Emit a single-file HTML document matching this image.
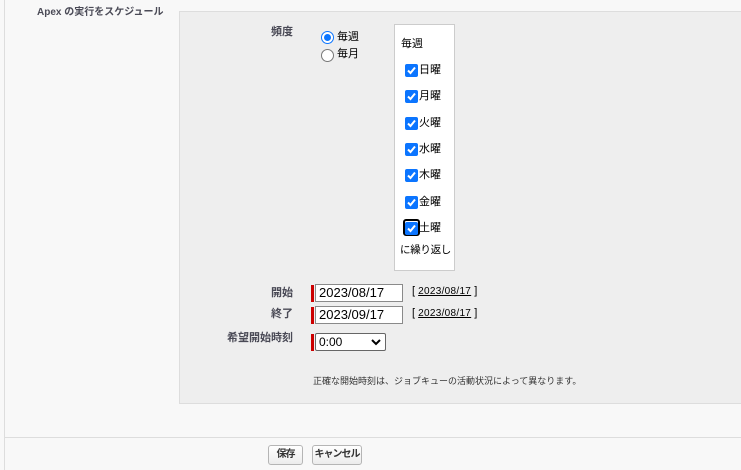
<!DOCTYPE html>
<html><head><meta charset="utf-8"><style>
*{margin:0;padding:0;box-sizing:border-box}
html,body{width:741px;height:470px}
body{background:#f8f8f8;font-family:"Liberation Sans","Noto Sans CJK JP",sans-serif;font-size:11px;color:#000;position:relative;overflow:hidden}
.a{position:absolute;white-space:nowrap}
.lbl{font-weight:bold;color:#4a4a56;font-size:11px}
.cb{position:absolute;width:13px;height:13px;background:#0b75ff;border-radius:2px}
.cb svg{position:absolute;left:1px;top:1px}
.inp{position:absolute;height:18px;border:1px solid #8a8a8a;background:#fff;font-size:13px;padding:0 3px;line-height:16px;white-space:nowrap}
.req{position:absolute;width:3px;height:17px;background:#c00}
.lnk{text-decoration:underline;font-size:10px;letter-spacing:.3px}
.btn{position:absolute;height:20px;border:1px solid #b5b5b5;border-radius:3px;background:linear-gradient(#fff,#ececec);font-weight:bold;font-size:10px;color:#333;text-align:center;line-height:18px;white-space:nowrap;overflow:hidden;letter-spacing:-1px}
</style></head><body>
<div class="a" style="left:4px;top:0;width:1px;height:470px;background:#ddd"></div>
<div class="a lbl" style="left:37px;top:3px;font-size:10px">Apex の実行をスケジュール</div>
<div class="a" style="left:179px;top:11px;width:570px;height:393px;background:#eee;border:1px solid #ddd"></div>
<div class="a lbl" style="left:271px;top:23px">頻度</div>
<div class="a" style="left:321px;top:31px;width:13px;height:13px;border-radius:50%;border:1px solid #0b75ff;background:#fff"><div style="position:absolute;left:2px;top:2px;width:7px;height:7px;border-radius:50%;background:#0b75ff"></div></div>
<div class="a" style="left:337px;top:28px">毎週</div>
<div class="a" style="left:321px;top:49px;width:13px;height:13px;border-radius:50%;border:1px solid #777;background:#fff"></div>
<div class="a" style="left:337px;top:45px">毎月</div>
<div class="a" style="left:394px;top:24px;width:61px;height:247px;background:#fff;border:1px solid #ccc"></div>
<div class="a" style="left:401px;top:35px">毎週</div>
<div class="a" style="left:403px;top:219px;width:17px;height:17px;border:2px solid #000;border-radius:3px"></div>
<div class="a" style="left:400px;top:242px;font-size:10.5px;letter-spacing:-.3px">に繰り返し</div>
<script>
var d=["日曜","月曜","火曜","水曜","木曜","金曜","土曜"];
for(var i=0;i<7;i++){var y=64+i*26.3;
document.write('<div class="cb" style="left:405px;top:'+y+'px"><svg width="11" height="11" viewBox="0 0 11 11"><path d="M2 5.5L4.5 8L9 2.5" stroke="#fff" stroke-width="2" fill="none"/></svg></div><div class="a" style="left:419px;top:'+(y-3)+'px">'+d[i]+'</div>');}
</script>
<div class="a lbl" style="left:271px;top:284px">開始</div>
<div class="req" style="left:311px;top:285px"></div>
<div class="inp" style="left:315px;top:284px;width:88px">2023/08/17</div>
<div class="a" style="left:412px;top:285px">[ <span class="lnk">2023/08/17</span> ]</div>
<div class="a lbl" style="left:271px;top:305px">終了</div>
<div class="req" style="left:311px;top:307px"></div>
<div class="inp" style="left:315px;top:306px;width:88px">2023/09/17</div>
<div class="a" style="left:412px;top:307px">[ <span class="lnk">2023/08/17</span> ]</div>
<div class="a lbl" style="left:227px;top:329px">希望開始時刻</div>
<div class="req" style="left:311px;top:334px"></div>
<div class="inp" style="left:315px;top:333px;width:71px;border-radius:2px;font-size:12px;border-color:#666">0:00<svg style="position:absolute;right:4px;top:5px" width="10" height="7" viewBox="0 0 10 7"><path d="M1 1L5 5L9 1" stroke="#000" stroke-width="2" fill="none"/></svg></div>
<div class="a" style="left:313px;top:374px;font-size:9px;color:#333">正確な開始時刻は、ジョブキューの活動状況によって異なります。</div>
<div class="a" style="left:5px;top:437px;width:736px;height:1px;background:#ddd"></div>
<div class="btn" style="left:268px;top:445px;width:35px">保存</div>
<div class="btn" style="left:312px;top:445px;width:50px">キャンセル</div>
</body></html>
